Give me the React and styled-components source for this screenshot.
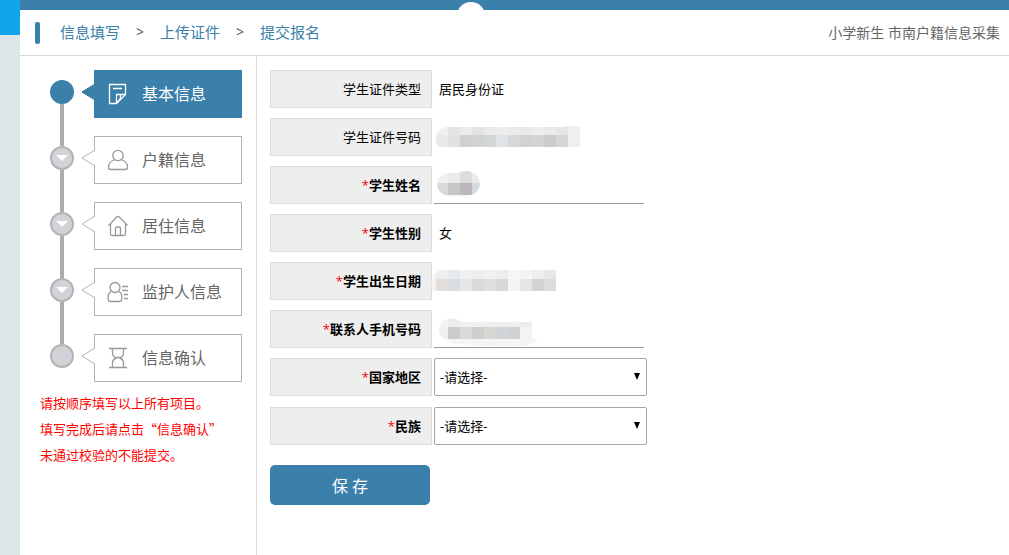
import React from "react";
import styled, { createGlobalStyle } from "styled-components";

const BLUE = "#3a80ab";

const GlobalStyle = createGlobalStyle`
  * { box-sizing: border-box; }
  body {
    margin: 0;
    background: #fff;
    font-family: "Open Sans", "Noto Sans CJK SC", sans-serif;
    font-size: 13px;
    color: #000;
  }
`;

const Page = styled.div`
  display: flex;
  min-height: 100vh;
`;

const Rail = styled.div`
  flex: 0 0 20px;
  background: #dce5e8;
  &::before {
    content: "";
    display: block;
    height: 35px;
    background: #10a5ec;
  }
`;

const Panel = styled.div`
  flex: 1;
  min-width: 0;
  display: flex;
  flex-direction: column;
`;

const TopBar = styled.div`
  position: relative;
  height: 10px;
  background: ${BLUE};
  overflow: hidden;
`;

const Notch = styled.span`
  position: absolute;
  top: 2px;
  left: 437px;
  width: 28px;
  height: 28px;
  border-radius: 50%;
  background: #fff;
`;

const Header = styled.header`
  display: flex;
  align-items: center;
  height: 46px;
  padding: 0 9px 0 15px;
  border-bottom: 1px solid #d9d9d9;
`;

const Marker = styled.span`
  width: 5px;
  height: 22px;
  margin-right: 20px;
  border-radius: 2px;
  background: ${BLUE};
`;

const Crumbs = styled.nav`
  display: flex;
  align-items: center;
  flex: 1;
  padding-bottom: 2px;
  font-size: 15px;
  line-height: 20px;
`;

const Crumb = styled.a`
  color: ${BLUE};
  text-decoration: none;
`;

const CrumbArrow = styled.span`
  width: 40px;
  text-align: center;
  font-size: 14px;
  color: #555;
`;

const Audience = styled.span`
  font-size: 14px;
  line-height: 20px;
  color: #666;
`;

const Main = styled.div`
  flex: 1;
  display: flex;
`;

const Sidebar = styled.aside`
  flex: 0 0 237px;
  padding: 14px 14px 0 20px;
  border-right: 1px solid #d9d9d9;
`;

const Steps = styled.ol`
  list-style: none;
  margin: 0;
  padding: 0 0 0 10px;
`;

const Step = styled.li`
  display: flex;
  gap: 20px;
  height: 66px;
  &:last-child { height: 48px; }
`;

const Track = styled.span`
  display: flex;
  flex-direction: column;
  align-items: center;
  flex: 0 0 24px;
  padding-top: 10px;
  &::after {
    content: "";
    flex: 0 0 42px;
    width: 4px;
    background: #adadad;
  }
  ${Step}:last-child &::after { display: none; }
`;

const Dot = styled.span`
  display: flex;
  align-items: center;
  justify-content: center;
  flex: 0 0 24px;
  width: 24px;
  border-radius: 50%;
  border: 2px solid ${(p) => (p.$active ? BLUE : "#b3b3b3")};
  background: ${(p) => (p.$active ? BLUE : "#d3d2d8")};
`;

const StepButton = styled.button`
  position: relative;
  display: flex;
  align-items: center;
  flex: 1;
  gap: 13px;
  height: 48px;
  padding: 0 0 0 12px;
  border: 1px solid ${(p) => (p.$active ? BLUE : "#b3b3b3")};
  background: ${(p) => (p.$active ? BLUE : "#fff")};
  color: ${(p) => (p.$active ? "#fff" : "#666")};
  font: inherit;
  font-size: 16px;
  text-align: left;
`;

const StepText = styled.span`
  padding-bottom: 2px;
`;

const Pointer = styled.svg`
  position: absolute;
  left: -14px;
  top: 12px;
`;

const Notice = styled.p`
  margin: 8px 0 0;
  font-family: "Noto Sans CJK SC", sans-serif;
  font-size: 13px;
  line-height: 26px;
  color: #f00;
  white-space: nowrap;
`;

const Form = styled.form`
  flex: 1;
  padding: 14px 13px;
`;

const Row = styled.div`
  display: flex;
  gap: 2px;
  min-height: ${(p) => (p.$tall ? "39px" : "38px")};
  margin-bottom: 10px;
`;

const Label = styled.label`
  flex: 0 0 162px;
  height: 38px;
  padding-right: 10px;
  border: 1px solid #dcdcdc;
  background: #eee;
  line-height: 36px;
  text-align: right;
  font-weight: ${(p) => (p.$required ? 700 : 400)};
`;

const Star = styled.span`
  color: #f00;
  font-weight: 400;
`;

const Value = styled.output`
  position: relative;
  height: 38px;
  padding-left: 5px;
  line-height: 38px;
`;

const InputBox = styled.div`
  position: relative;
  flex: 0 1 210px;
`;

const TextInput = styled.input`
  display: block;
  width: 100%;
  height: 38px;
  padding: 0 5px;
  border: 0;
  border-bottom: 1px solid #999;
  background: transparent;
  font: inherit;
`;

const SelectBox = styled.div`
  position: relative;
  flex: 0 1 213px;
`;

const Select = styled.select`
  appearance: none;
  display: block;
  width: 100%;
  height: 38px;
  padding: 0 5px;
  border: 1px solid #a6a6a6;
  border-radius: 2px;
  background: #fff;
  color: #000;
  font: inherit;
`;

const SelectArrow = styled.svg`
  position: absolute;
  right: 7px;
  top: 15px;
  pointer-events: none;
`;

const SaveButton = styled.button`
  display: block;
  width: 160px;
  height: 40px;
  margin-top: 19px;
  border: 0;
  border-radius: 5px;
  background: ${BLUE};
  color: #fff;
  font: inherit;
  font-size: 16px;
`;

const MaskSvg = styled.svg`
  position: absolute;
  left: -6px;
  top: 0;
  pointer-events: none;
`;

const masks = {
  idNumber: {
    clip: "M18 9H134Q140 7 152 9V29H12Q7 27 8 19Q9 11 18 9Z",
    rows: [
      [8, 7, 10, ["#f0f0f0", "#e4e4e5", "#ebebeb", "#e4e3e4", "#eaeaea", "#ededee", "#eaeaea", "#e9e9ea", "#ededed", "#eaeaea", "#e6e6e6", "#efeff1"]],
      [8, 17, 12, ["#e9e9e9", "#e2e1e2", "#d3cfd1", "#d3d3d3", "#d2d6d6", "#dfe4e6", "#d8d7d8", "#d3d2d3", "#d5d4d5", "#cccbca", "#d6d6d7", "#eeeff2"]],
    ],
  },
  name: {
    clip: "M20 7H30Q34 5 40 5Q52 8 52 18Q51 27 43 29Q36 33 20 30Q9 27 9 18Q10 9 20 7Z",
    rows: [
      [8, 5, 12, ["#efefef", "#e9eaea", "#dddedb", "#e8e9eb"]],
      [8, 17, 12, ["#dadada", "#c7c6c6", "#bab8ba", "#d4d9dc"]],
      [8, 29, 4, ["#f6f6f6", "#f6f6f6", "#f6f6f6", "#f6f6f6"]],
    ],
  },
  birth: {
    clip: "M12 8H128V29H6Q2 26 4 19Q6 10 12 8Z",
    rows: [
      [-4, 8, 9, ["#f3f3f3", "#efefef", "#e7eaed", "#f1f1f1", "#eeeeeb", "#f1f1f1", "#ececec", "#f6f6f6", "#f4f4f4", "#eeeeee", "#e7e8ea"]],
      [-4, 17, 12, ["#f3f3f3", "#e2dedb", "#d8dfe3", "#e7e7e7", "#dadadb", "#dfdee0", "#d9d8d8", "#f3f3f3", "#e7e4e2", "#d3d3d4", "#dbdddc"]],
    ],
  },
  phone: {
    clip: "M16 10Q26 6 34 12H104V29H110Q104 36 94 36Q60 37 30 34Q12 31 11 21Q11 12 16 10Z",
    rows: [
      [8, 7, 10, ["#f1f2f1", "#ebecec", "#f0f0f0", "#f0f0f0", "#f0f0f0", "#eeeeee", "#f0f0f0", "#ededed", "#f4f4f4"]],
      [8, 17, 12, ["#eff0f0", "#cccbca", "#d8d8dd", "#cfcdce", "#d8d6d1", "#d1d5da", "#d2d1d2", "#f3f3f6", "#f8f8f8"]],
      [8, 29, 8, ["#f5f5f5", "#f5f5f5", "#f5f5f5", "#f5f5f5", "#f5f5f5", "#f5f5f5", "#f5f5f5", "#f5f5f5", "#f5f5f5"]],
    ],
  },
};

function Mask({ kind }) {
  const { clip, rows } = masks[kind];
  return (
    <MaskSvg width="160" height="38" shapeRendering="crispEdges" aria-hidden="true">
      <clipPath id={`mask-${kind}`}>
        <path d={clip} />
      </clipPath>
      <g clipPath={`url(#mask-${kind})`}>
        {rows.map(([x, y, h, colors]) =>
          colors.map((c, i) => (
            <rect key={`${y}-${i}`} x={x + i * 12} y={y} width="12" height={h} fill={c} />
          ))
        )}
      </g>
    </MaskSvg>
  );
}

const iconPaths = {
  note: (
    <>
      <path d="M2.500 1.500h16v10l-9 9h-7z" />
      <path d="M6 5.500h9M9.500 20.500v-9h9M9.500 20l4-4.500v-4" />
    </>
  ),
  user: (
    <>
      <circle cx="11" cy="6.500" r="5.200" />
      <path d="M7 11c-3.500 1-5.500 4-5.500 7.500 0 1.500.7 2 2 2h15c1.300 0 2-.5 2-2 0-3.500-2-6.500-5.500-7.500" />
    </>
  ),
  home: (
    <>
      <path d="M1.500 10.500L10 1.800q1-.8 2 0l8.500 8.700M3.500 9v10q0 1.500 1.500 1.500h12q1.500 0 1.500-1.500V9" />
      <path d="M8.500 20.500v-7q0-1.500 1.500-1.500h2q1.500 0 1.500 1.500v7" />
    </>
  ),
  guardian: (
    <>
      <circle cx="8" cy="6.500" r="5" />
      <path d="M4 10.500c-2 1-2.800 3-2.800 5v2.500q0 2.500 2.500 2.500h8.600q2.500 0 2.500-2.500v-2.500c0-2-.8-4-2.800-5" />
      <path d="M15 5.500h6M15 9.500h6M17 13.500h4M17 17.500h4" />
    </>
  ),
  glass: (
    <>
      <path d="M2 1.500h18M2 20.500h18" />
      <path d="M5.500 1.500v4q0 4.500 4 5.500q-4 1-4 5.500v4M16.500 1.500v4q0 4.500-4 5.500q4 1 4 5.500v4M8.500 10.500h5" />
    </>
  ),
};

function StepIcon({ name, active }) {
  return (
    <svg width="22" height="22" viewBox="0 0 22 22" fill="none" stroke={active ? "#fff" : "#999"} strokeWidth="1.300" aria-hidden="true">
      {iconPaths[name]}
    </svg>
  );
}

const steps = [
  { icon: "note", text: "基本信息", active: true },
  { icon: "user", text: "户籍信息", arrow: true },
  { icon: "home", text: "居住信息", arrow: true },
  { icon: "guardian", text: "监护人信息", arrow: true },
  { icon: "glass", text: "信息确认" },
];

function StepItem({ icon, text, active, arrow }) {
  return (
    <Step>
      <Track>
        <Dot $active={active}>
          {arrow && (
            <svg width="12" height="6" aria-hidden="true">
              <path d="M0 0h12L6 6z" fill="#fff" />
            </svg>
          )}
        </Dot>
      </Track>
      <StepButton type="button" $active={active}>
        <Pointer width="15" height="18" aria-hidden="true">
          <path d="M15 1L1 9L15 17z" fill={active ? BLUE : "#fff"} />
          <path d="M14 1L1 9L14 17" fill="none" stroke={active ? "#2a648f" : "#b3b3b3"} />
        </Pointer>
        <StepIcon name={icon} active={active} />
        <StepText>{text}</StepText>
      </StepButton>
    </Step>
  );
}

function FieldLabel({ id, required, children }) {
  return (
    <Label htmlFor={id} $required={required}>
      {required && <Star>*</Star>}
      {children}
    </Label>
  );
}

function ValueRow({ id, label, required, mask, children }) {
  return (
    <Row>
      <FieldLabel id={id} required={required}>{label}</FieldLabel>
      <Value id={id}>
        {children}
        {mask && <Mask kind={mask} />}
      </Value>
    </Row>
  );
}

function InputRow({ id, label, mask }) {
  return (
    <Row>
      <FieldLabel id={id} required>{label}</FieldLabel>
      <InputBox>
        <TextInput id={id} type="text" />
        <Mask kind={mask} />
      </InputBox>
    </Row>
  );
}

function SelectRow({ id, label }) {
  return (
    <Row $tall>
      <FieldLabel id={id} required>{label}</FieldLabel>
      <SelectBox>
        <Select id={id}>
          <option>-请选择-</option>
        </Select>
        <SelectArrow width="6" height="7" aria-hidden="true">
          <path d="M0 0h6L3 7z" />
        </SelectArrow>
      </SelectBox>
    </Row>
  );
}

export default function App() {
  return (
    <>
      <GlobalStyle />
      <Page>
        <Rail />
        <Panel>
          <TopBar>
            <Notch />
          </TopBar>
          <Header>
            <Marker />
            <Crumbs>
              <Crumb href="#fill">信息填写</Crumb>
              <CrumbArrow>&gt;</CrumbArrow>
              <Crumb href="#upload">上传证件</Crumb>
              <CrumbArrow>&gt;</CrumbArrow>
              <Crumb href="#submit">提交报名</Crumb>
            </Crumbs>
            <Audience>小学新生 市南户籍信息采集</Audience>
          </Header>
          <Main>
            <Sidebar>
              <Steps>
                {steps.map((s) => (
                  <StepItem key={s.text} {...s} />
                ))}
              </Steps>
              <Notice>
                请按顺序填写以上所有项目。
                <br />
                填写完成后请点击“信息确认”
                <br />
                未通过校验的不能提交。
              </Notice>
            </Sidebar>
            <Form onSubmit={(e) => e.preventDefault()}>
              <ValueRow id="idType" label="学生证件类型">居民身份证</ValueRow>
              <ValueRow id="idNumber" label="学生证件号码" mask="idNumber" />
              <InputRow id="name" label="学生姓名" mask="name" />
              <ValueRow id="gender" label="学生性别" required>女</ValueRow>
              <ValueRow id="birth" label="学生出生日期" required mask="birth" />
              <InputRow id="phone" label="联系人手机号码" mask="phone" />
              <SelectRow id="country" label="国家地区" />
              <SelectRow id="ethnic" label="民族" />
              <SaveButton type="submit">保 存</SaveButton>
            </Form>
          </Main>
        </Panel>
      </Page>
    </>
  );
}
